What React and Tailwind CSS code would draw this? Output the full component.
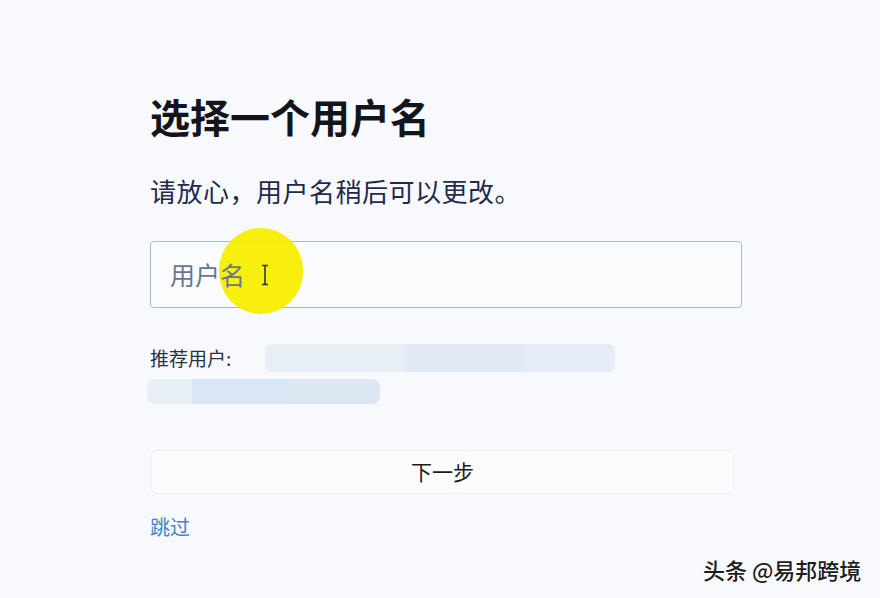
import React from "react";

export default function App() {
  return (
    <div
      className="relative w-[880px] h-[598px] overflow-hidden bg-[#f8f9fc]"
      style={{ fontFamily: '"Noto Sans CJK SC", "Noto Sans", sans-serif' }}
    >
      <div className="pl-[150px] pt-[88px] w-[742px]">
        {/* 标题 */}
        <h1 className="text-[40px] leading-[56px] font-bold text-[#14141c]">选择一个用户名</h1>
        <p className="mt-[30px] text-[26px] leading-[34px] tracking-[0.5px] text-[#1f2a4d]">请放心，用户名稍后可以更改。</p>

        {/* 输入框 */}
        <div className="relative mt-[33px] h-[67px] border border-[#a9b9c9] rounded-[4px] bg-[#fafbfd] flex items-center pl-[19px]">
          <div className="absolute left-[68px] top-[-14px] w-[84px] h-[86px] rounded-full bg-[#f7ee00] opacity-95" />
          <span className="relative text-[25px] text-[#6b7590]">用户名</span>
          <svg className="relative ml-[16px]" width="8" height="22" viewBox="0 0 8 22">
            <path d="M1 1.5h6M4 1.5v19M1 20.5h6" stroke="#333" strokeWidth="1.6" fill="none" />
          </svg>
        </div>

        {/* 推荐用户 */}
        <div className="mt-[36px] flex items-center">
          <span className="text-[19px] leading-[24px] text-[#2a2f44]">推荐用户:</span>
          <div className="ml-[34px] flex h-[28px] w-[350px] rounded-[6px] overflow-hidden">
            <div className="w-[140px] bg-[#e8eef6]" />
            <div className="w-[120px] bg-[#e1e9f4]" />
            <div className="w-[90px] bg-[#e6edf6]" />
          </div>
        </div>
        <div className="mt-[7px] -ml-[3px] flex h-[25px] w-[233px] rounded-[8px] overflow-hidden">
          <div className="w-[45px] bg-[#e8eef6]" />
          <div className="w-[95px] bg-[#d9e6f3]" />
          <div className="w-[93px] bg-[#dbe7f3]" />
        </div>

        {/* 下一步 */}
        <button className="mt-[46px] w-[583px] h-[44px] border border-[#eceff3] rounded-[6px] bg-[#fcfcfe] text-[21px] text-[#1a1a22] ml-px">
          下一步
        </button>

        <div className="mt-[20px] text-[20px] leading-[26px] text-[#3f86c8]">跳过</div>
      </div>

      {/* 水印 */}
      <div
        className="absolute left-[703px] top-[555px] text-[22px] leading-[28px] font-medium text-[#1c1c1c]"
        style={{ textShadow: "1px 1px 0 #fff" }}
      >
        头条 @易邦跨境
      </div>
    </div>
  );
}
